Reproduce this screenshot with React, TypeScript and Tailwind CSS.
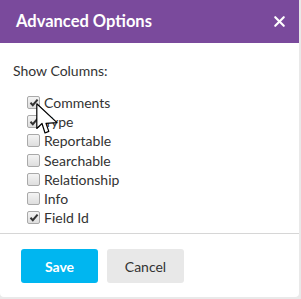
import { X } from 'lucide-react';

const columns = [
  { label: 'Comments', checked: true },
  { label: 'Type', checked: true },
  { label: 'Reportable', checked: false },
  { label: 'Searchable', checked: false },
  { label: 'Relationship', checked: false },
  { label: 'Info', checked: false },
  { label: 'Field Id', checked: true },
];

function Box({ checked }: { checked: boolean }) {
  return (
    <span className="w-[13px] h-[13px] rounded-[2px] border border-[#a9a9a9] bg-gradient-to-b from-[#f4f4f4] to-[#dedede] flex items-center justify-center shrink-0">
      {checked && (
        <svg width="10" height="9" viewBox="0 0 10 9">
          <path d="M1.5 4.8 L3.8 7.2 L8.6 1.6" fill="none" stroke="#333" strokeWidth="2" />
        </svg>
      )}
    </span>
  );
}

export default function App() {
  return (
    <div className="w-[301px] h-[299px] bg-[#e9e9e9] font-['Lato','Liberation_Sans',sans-serif]">
      <div className="relative w-[299px] h-[297px] bg-white rounded-b-[4px] flex flex-col overflow-hidden">
        <div className="h-[43px] bg-[#7a4a9c] flex items-center justify-between pl-4 pr-[11px]">
          <h2 className="text-white font-bold text-[16.5px]">Advanced Options</h2>
          <X size={17} strokeWidth={3} className="text-white" />
        </div>

        <div className="pl-[13px] pt-[19px]">
          <p className="text-[14px] text-[#333] leading-[17px]">Show Columns:</p>
          <div className="mt-[14px] pl-[14px] flex flex-col">
            {columns.map((c) => (
              <label key={c.label} className="h-[19.2px] flex items-center gap-[4px] text-[14px] text-[#333]">
                <Box checked={c.checked} />
                {c.label}
              </label>
            ))}
          </div>
        </div>

        <div className="mt-auto border-t border-[#d6d6d6] h-[64px] px-[21px] pt-[15px] flex gap-[9px]">
          <button className="w-[77px] h-[34px] rounded-[3px] bg-[#00b6f0] text-white font-bold text-[14px]">
            Save
          </button>
          <button className="w-[77px] h-[34px] rounded-[3px] bg-[#e8e8e8] text-[#333] text-[14px]">
            Cancel
          </button>
        </div>

        {/* mouse pointer */}
        <svg className="absolute left-[36px] top-[103px]" width="23" height="32" viewBox="0 0 23 32">
          <path
            d="M0.8 0.8 L0.8 25.5 L6 20.5 L9 30 L12.8 28.4 L10 20.4 L21 19.6 Z"
            fill="#fff"
            stroke="#000"
            strokeWidth="1.2"
            strokeLinejoin="round"
          />
        </svg>
      </div>
    </div>
  );
}
